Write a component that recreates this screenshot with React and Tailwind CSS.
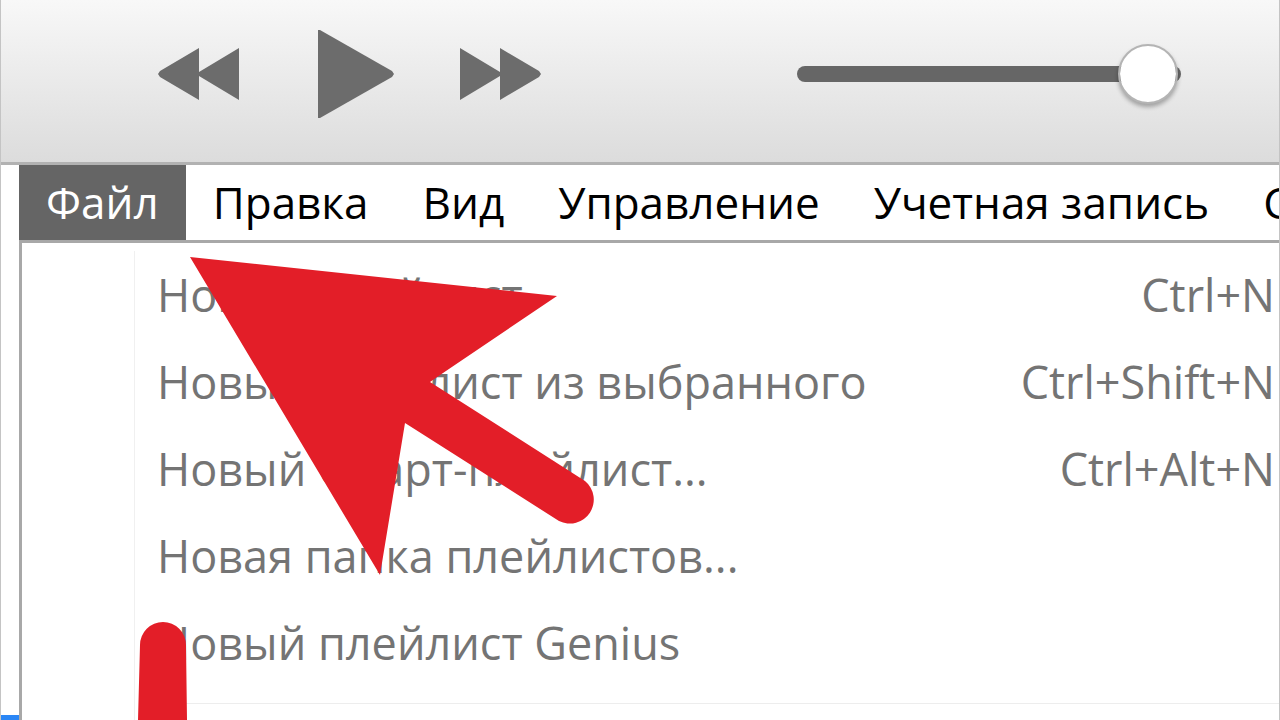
import React, { useState } from 'react';

const MENU = ['Файл', 'Правка', 'Вид', 'Управление', 'Учетная запись', 'Справка'];

const FILE_ITEMS = [
  { label: 'Новый плейлист', keys: 'Ctrl+N' },
  { label: 'Новый плейлист из выбранного', keys: 'Ctrl+Shift+N' },
  { label: 'Новый Смарт-плейлист...', keys: 'Ctrl+Alt+N' },
  { label: 'Новая папка плейлистов...' },
  { label: 'Новый плейлист Genius' },
];

// 1. PLAYER BAR
const PlayerBar = () => {
  const [volume, setVolume] = useState(99);

  return (
    <header className="flex items-center border-b-3 border-[#b2b2b2] bg-linear-to-b from-[#f8f8f8] to-[#dcdcdc] pt-[30px] pr-[98px] pb-11 pl-[157px]">
      <button aria-label="Назад" className="shrink-0">
        <svg width="82" height="54" viewBox="0 0 82 54" fill="#6c6c6c" className="block">
          <path d="M0 27 L2 24 L41 1 V25 L81 1 V53 L41 29 V53 L2 30 Z" />
        </svg>
      </button>
      <button aria-label="Воспроизвести" className="ml-[78px] shrink-0">
        <svg width="76" height="88" viewBox="0 0 76 88" fill="#6c6c6c" className="block">
          <path d="M0 0 H2 L74 41 L76 44 L74 47 L2 88 H0 Z" />
        </svg>
      </button>
      <button aria-label="Вперед" className="ml-[66px] shrink-0">
        <svg width="82" height="54" viewBox="0 0 82 54" fill="#6c6c6c" className="block">
          <path d="M0 1 L40 25 V1 L79 24 L81 27 L79 30 L40 53 V29 L0 53 Z" />
        </svg>
      </button>
      <input
        type="range"
        aria-label="Громкость"
        value={volume}
        onChange={e => setVolume(Number(e.target.value))}
        className="ml-auto h-4 w-96 appearance-none rounded-full bg-[#666666] [&::-webkit-slider-thumb]:size-[60px] [&::-webkit-slider-thumb]:appearance-none [&::-webkit-slider-thumb]:rounded-full [&::-webkit-slider-thumb]:border-2 [&::-webkit-slider-thumb]:border-[#b4b4b4] [&::-webkit-slider-thumb]:bg-white [&::-webkit-slider-thumb]:bg-clip-padding [&::-webkit-slider-thumb]:shadow-[0_3px_4px_rgba(0,0,0,0.3)]"
      />
    </header>
  );
};

// 2. MENU BAR
const MenuBar = ({ active, onSelect }) => (
  <nav className="flex overflow-hidden border-b-3 border-[#a8a8a8]">
    {MENU.map(name => (
      <button
        key={name}
        onClick={() => onSelect(name)}
        className={`shrink-0 px-[27px] text-[44px] leading-[75px] ${name === active ? 'bg-[#656565] text-white' : 'text-black'}`}
      >
        {name}
      </button>
    ))}
  </nav>
);

// 3. FILE MENU
const FileMenu = () => (
  <div className="flex flex-1 border-l-3 border-[#a8a8a8]">
    <div className="mt-2 w-[113px] shrink-0 border-r border-[#f0f0f0]" />
    <div className="flex-1 pt-2">
      {FILE_ITEMS.map(item => (
        <button key={item.label} className="flex w-full justify-between pr-1 pl-[22px] text-[45px] leading-[87px] whitespace-nowrap text-[#747474]">
          <span>{item.label}</span>
          <span>{item.keys}</span>
        </button>
      ))}
      <hr className="mt-[17px] ml-6 border-[#ededed]" />
    </div>
  </div>
);

// 4. POINTER MARKS OVER THE MENU
const Marks = () => (
  <svg width="620" height="720" viewBox="1 0 620 720" fill="#e31e28" className="pointer-events-none absolute top-0 left-0">
    <path d="M190 257 L557 296 L443 373 L430 382 L585 481 A24 24 0 0 1 559 521 L405 423 L380 575 Z" />
    <path d="M138 720 L140 645 A23 23 0 0 1 186 645 L187 720 Z" />
  </svg>
);

export default function App() {
  const [active, setActive] = useState('Файл');

  return (
    <div className="relative flex h-screen flex-col overflow-hidden border-x border-[#c4c4c4] bg-white font-['Open_Sans','Noto_Sans',sans-serif]">
      <PlayerBar />
      <div className="flex min-h-0 flex-1">
        <div className="flex w-[18px] shrink-0 flex-col justify-end">
          <div className="h-[5px] bg-[#2a86f5]" />
        </div>
        <div className="flex min-w-0 flex-1 flex-col">
          <MenuBar active={active} onSelect={setActive} />
          {active === 'Файл' && <FileMenu />}
        </div>
      </div>
      <Marks />
    </div>
  );
}
